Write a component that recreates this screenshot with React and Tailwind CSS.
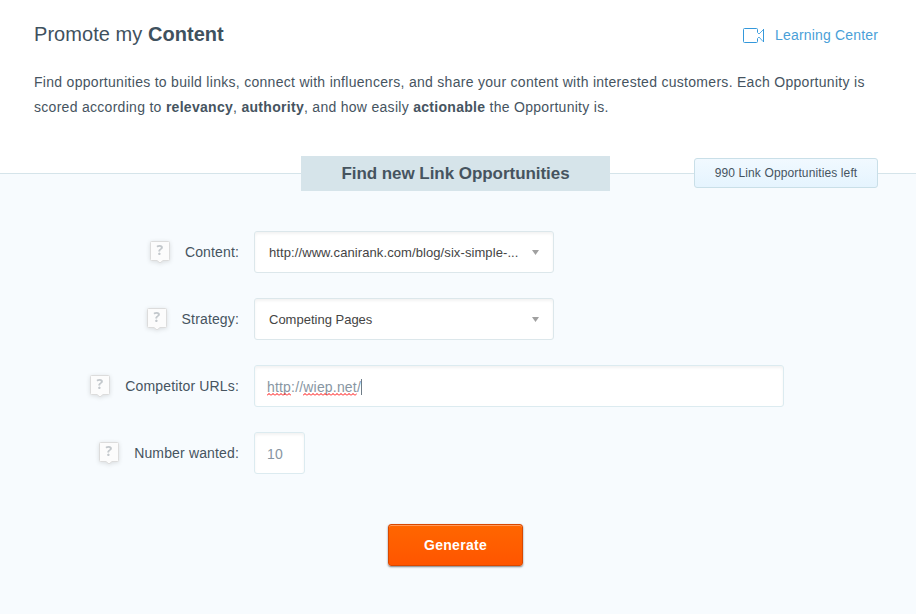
import { useState } from 'react'

const fields = [
  { label: 'Content:', type: 'select', value: 'http://www.canirank.com/blog/six-simple-...' },
  { label: 'Strategy:', type: 'select', value: 'Competing Pages' },
  { label: 'Competitor URLs:', type: 'url' },
  { label: 'Number wanted:', type: 'number' }
]

const VideoIcon = () => (
  <svg className="w-[21px] h-[16px]" viewBox="0 0 21 16" fill="none" stroke="#3498db">
    <path d="M14.500 4.500v-3a1 1 0 0 0-1-1h-12a1 1 0 0 0-1 1v12a1 1 0 0 0 1 1h12a1 1 0 0 0 1-1v-3" />
    <path d="M14.500 4.500l1.500 1.500 4-4M14.500 10.500L16 9l4 4.500" strokeWidth="0.8" />
    <path d="M20.500 1v13" />
  </svg>
)

const HelpIcon = () => (
  <svg className="relative top-px w-[24px] h-[28px] -mx-[2px] overflow-visible drop-shadow-[0_1px_2px_rgba(0,0,0,0.12)]" viewBox="0 0 24 28">
    <path
      d="M3.500 2.500h17a1 1 0 0 1 1 1v17a1 1 0 0 1-1 1h-5.500l-3 2.500-3-2.500h-5.500a1 1 0 0 1-1-1v-17a1 1 0 0 1 1-1z"
      fill="#fcfcfc"
      stroke="#dcdcdc"
    />
    <text x="12" y="16" textAnchor="middle" fontSize="14" fontWeight="bold" fill="#c3c8cc" fontFamily="Open Sans, sans-serif">
      ?
    </text>
  </svg>
)

const SelectBox = ({ value }) => (
  <button className="flex items-center justify-between w-[300px] h-[42px] pl-[14px] pr-[14px] bg-white border border-[#dce7eb] rounded-[3px] shadow-[inset_0_2px_3px_rgba(0,0,0,0.05)] text-[13px] text-[#444444]">
    <span className={value.startsWith('http') ? 'pt-[2px] tracking-[0.09px]' : 'pt-[2px]'}>{value}</span>
    <svg className="w-[7px] h-[5px]" viewBox="0 0 7 5">
      <path d="M0 0h7L3.500 5z" fill="#a0a0a0" />
    </svg>
  </button>
)

// Word marked by the spell checker
const Misspelled = ({ children }) => (
  <span className="relative">
    {children}
    <svg className="absolute left-0 bottom-0 w-full h-[3px]">
      <defs>
        <pattern id="squiggle" width="4" height="3" patternUnits="userSpaceOnUse">
          <path d="M0 2.500L2 .5l2 2" fill="none" stroke="#ff0000" strokeWidth="1" />
        </pattern>
      </defs>
      <rect width="100%" height="3" fill="url(#squiggle)" />
    </svg>
  </span>
)

const UrlBox = () => (
  <div className="flex items-center w-[530px] h-[42px] px-3 pt-[2px] bg-white border border-[#dcebf0] rounded-[3px] shadow-[inset_0_2px_3px_rgba(0,0,0,0.05)] text-[14px] leading-[17px] tracking-[0.18px] text-[#8896a2]">
    <Misspelled>http</Misspelled>
    <span>://</span>
    <Misspelled>wiep.net</Misspelled>
    <span>/</span>
    <span className="w-px h-4 bg-[#6f7d88]" />
  </div>
)

const App = () => {
  const [count, setCount] = useState('10')

  return (
    <div className="min-h-[614px] flex flex-col bg-white font-['Liberation_Sans',Arial,sans-serif] text-[#46545f]">
      <header className="h-[173px] px-[34px] pt-[22px]">
        <div className="flex justify-between pr-1">
          <h1 className="text-[20px] leading-6 tracking-[0.05px] text-[#3f515e]">
            Promote my <strong>Content</strong>
          </h1>
          <a href="#" className="flex items-center gap-[11px] h-[26px] text-[14px] tracking-[0.17px] text-[#4a9fd8]">
            <span className="pt-px">
              <VideoIcon />
            </span>
            Learning Center
          </a>
        </div>
        <p className="mt-[22px] text-[14px] leading-[25px] tracking-[0.29px] whitespace-nowrap">
          Find opportunities to build links, connect with influencers, and share your content with interested customers. Each Opportunity is
          <br />
          scored according to <strong>relevancy</strong>, <strong>authority</strong>, and how easily <strong>actionable</strong> the Opportunity is.
        </p>
      </header>

      <main className="flex-1 border-t border-[#d5e4ea] bg-[#f7fbfe]">
        {/* Tab and remaining credits sit across the divider */}
        <div className="-mt-[18px] pl-[301px] pr-[38px] flex items-start justify-between">
          <h2 className="w-[309px] h-[35px] bg-[#d6e4ea] text-center text-[17px] leading-[35px] tracking-[-0.05px] font-bold text-[#46545f]">
            Find new Link Opportunities
          </h2>
          <div className="mt-[2px] w-[184px] h-[30px] border border-[#c9dfe8] rounded-[3px] bg-linear-to-b from-[#f1f9ff] to-[#e5f4fe] text-center text-[12px] leading-[28px] tracking-[0.12px]">
            990 Link Opportunities left
          </div>
        </div>

        <form className="pt-10 flex flex-col gap-[25px]">
          {fields.map((field) => (
            <div key={field.label} className="flex items-center gap-[15px] h-[42px]">
              <label className="w-[239px] flex items-center justify-end gap-[15px] text-[14px] tracking-[0.15px]">
                <HelpIcon />
                {field.label}
              </label>
              {field.type === 'select' && <SelectBox value={field.value} />}
              {field.type === 'url' && <UrlBox />}
              {field.type === 'number' && (
                <input
                  value={count}
                  onChange={(e) => setCount(e.target.value)}
                  className="w-[51px] h-[42px] pl-3 pt-[2px] bg-white border border-[#dcebf0] rounded-[3px] shadow-[inset_0_2px_3px_rgba(0,0,0,0.05)] text-[14px] tracking-[0.3px] text-[#8896a2]"
                />
              )}
            </div>
          ))}
          <button
            type="button"
            className="mt-[25px] ml-[388px] w-[135px] h-[42px] rounded-[3px] border border-[#d94800] bg-linear-to-b from-[#ff6600] to-[#ff5500] shadow-[inset_0_1px_0_#ff9a5c,0_1px_2px_rgba(0,0,0,0.5)] text-[14px] tracking-[0.3px] font-bold text-white"
          >
            Generate
          </button>
        </form>
      </main>
    </div>
  )
}

export default App
